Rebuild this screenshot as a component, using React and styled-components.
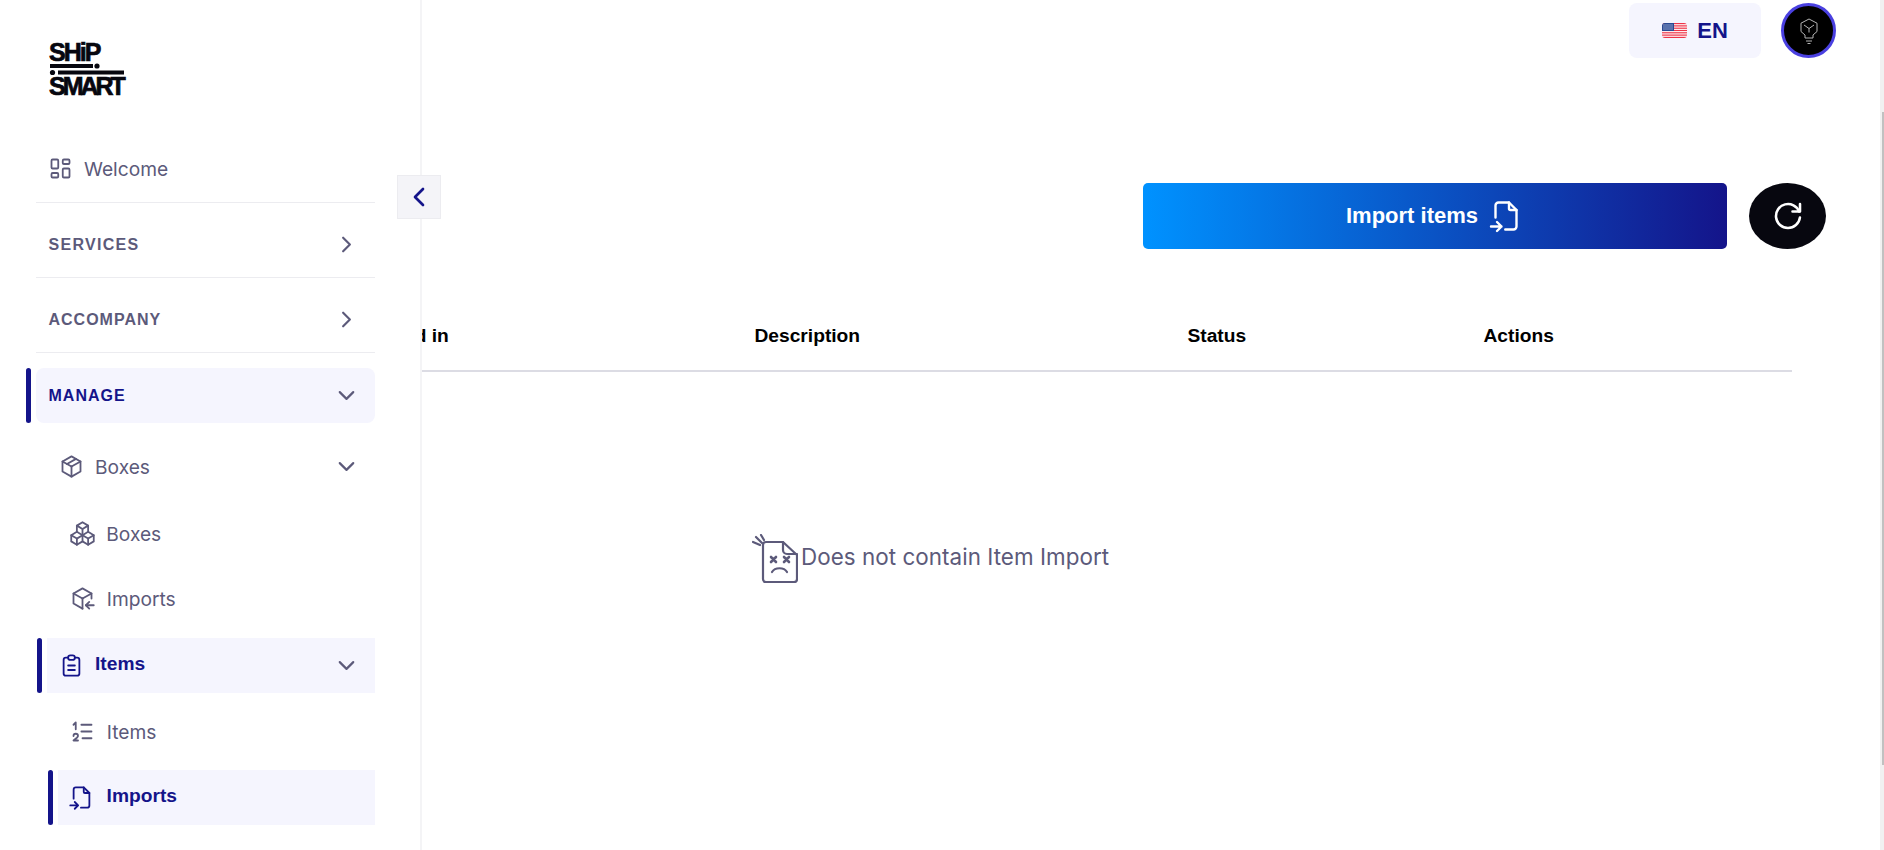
import React from 'react';
import styled, { createGlobalStyle } from 'styled-components';
import {
  TbLayoutDashboard,
  TbChevronRight,
  TbChevronDown,
  TbChevronLeft,
  TbPackage,
  TbPackages,
  TbPackageImport,
  TbClipboardText,
  TbListNumbers,
  TbFileImport,
  TbReload,
} from 'react-icons/tb';

const NAVY = '#14148a';
const MUTED = '#5c5a7a';
const TINT = '#f5f5fe';

const GlobalStyle = createGlobalStyle`
  html, body {
    margin: 0;
    height: 100%;
    overflow: hidden;
    background: #fff;
  }
  #root {
    height: 100%;
  }
  * {
    box-sizing: border-box;
  }
`;

const Page = styled.div`
  display: flex;
  height: 850px;
  width: 1884px;
  overflow: hidden;
  font-family: Inter, "Liberation Sans", sans-serif;
`;

const Sidebar = styled.aside`
  position: relative;
  z-index: 2;
  flex: 0 0 422px;
  background: #fff;
  border-right: 2px solid #f4f4f6;
  padding: 43px 45px 0 0;
`;

const Logo = styled.div`
  width: 78px;
  height: 54px;
  margin: 0 0 38px 49px;
  display: flex;
  flex-direction: column;
  color: #07070f;
  font-family: "Liberation Sans", sans-serif;
  font-weight: 700;
`;

const LogoWord = styled.span`
  display: block;
  height: 18px;
  font-size: 25px;
  line-height: 18px;
  letter-spacing: ${p => p.$spacing}px;
  white-space: nowrap;
  -webkit-text-stroke: 0.7px #07070f;
`;

const LogoBars = styled.svg`
  display: block;
  flex: none;
  width: 76px;
  height: 16px;
`;

const Row = styled.div`
  position: relative;
  display: flex;
  align-items: center;
  height: ${p => p.$h || 55}px;
  margin-left: ${p => p.$left}px;
  padding-left: ${p => p.$pad}px;
  padding-right: 15px;
  padding-top: ${p => p.$top || 0}px;
  color: ${p => (p.$active ? NAVY : MUTED)};
  background: ${p => (p.$active ? TINT : 'transparent')};
  border-radius: ${p => p.$radius || 0}px;
  border-bottom: ${p => (p.$line ? '1px solid #ececf0' : 'none')};
  margin-bottom: ${p => p.$gap || 0}px;
`;

const Marker = styled.span`
  position: absolute;
  left: -10px;
  top: 0;
  bottom: 0;
  width: 5px;
  border-radius: 3px;
  background: ${NAVY};
`;

const RowIcon = styled.span`
  display: flex;
  flex: none;
  font-size: 27px;
  margin-right: ${p => p.$gap || 10.5}px;
  color: ${p => (p.$active ? NAVY : MUTED)};
  svg {
    stroke-width: 1.6;
  }
`;

const Label = styled.span`
  flex: 1;
  font-family: ${p => (p.$active ? '"Liberation Sans", sans-serif' : 'inherit')};
  font-size: 19.2px;
  font-weight: ${p => (p.$active ? 700 : 400)};
  padding-bottom: ${p => (p.$active ? 3 : 0)}px;
`;

const Heading = styled.span`
  flex: 1;
  font-family: "Liberation Sans", sans-serif;
  font-size: 16px;
  font-weight: 700;
  letter-spacing: ${p => p.$spacing || 1}px;
`;

const Caret = styled.span`
  display: flex;
  flex: none;
  font-size: 27px;
  color: ${MUTED};
  svg {
    stroke-width: 1.9;
  }
`;

const Collapse = styled.button`
  position: absolute;
  top: 175px;
  right: -21px;
  width: 44px;
  height: 44px;
  padding: 0;
  display: flex;
  align-items: center;
  justify-content: center;
  background: #f4f4f8;
  border: 1px solid #ececf0;
  color: ${NAVY};
  font-size: 32px;
`;

const Main = styled.main`
  flex: 1;
  min-width: 0;
  display: flex;
  flex-direction: column;
`;

const TopBar = styled.div`
  flex: none;
  height: 183px;
  padding: 3px 44px 0 0;
  display: flex;
  justify-content: flex-end;
  gap: 20px;
`;

const LangButton = styled.button`
  width: 132px;
  height: 55px;
  border: 0;
  border-radius: 8px;
  background: ${TINT};
  display: flex;
  align-items: center;
  justify-content: center;
  gap: 10px;
  color: ${NAVY};
  font-family: "Liberation Sans", sans-serif;
  font-size: 22px;
  font-weight: 700;
`;

const Avatar = styled.div`
  width: 55px;
  height: 55px;
  border-radius: 50%;
  background: #000;
  border: 3px solid #4a40e0;
  display: flex;
  align-items: center;
  justify-content: center;
`;

const Actions = styled.div`
  display: flex;
  justify-content: flex-end;
  gap: 22px;
  padding-right: 54px;
`;

const ImportButton = styled.button`
  width: 584px;
  height: 66px;
  border: 0;
  border-radius: 5px;
  background: linear-gradient(90deg, #0092ff 0%, #14148a 100%);
  color: #fff;
  display: flex;
  align-items: center;
  justify-content: center;
  gap: 10px;
  font-family: "Liberation Sans", sans-serif;
  font-size: 22px;
  font-weight: 700;
  svg {
    font-size: 36px;
    stroke-width: 1.6;
  }
`;

const RefreshButton = styled.button`
  width: 77px;
  height: 66px;
  border: 0;
  padding: 0;
  border-radius: 50%;
  background: #07070f;
  color: #fff;
  display: flex;
  align-items: center;
  justify-content: center;
  font-size: 36px;
  svg {
    stroke-width: 1.7;
  }
`;

const Table = styled.div`
  margin: 37px 88px 0 -67px;
`;

const HeaderRow = styled.div`
  display: grid;
  grid-template-columns: 399.5px 433px 296px 1fr;
  height: 86px;
  padding-top: 16px;
  align-items: center;
  border-bottom: 2px solid #dcdce4;
  color: #000;
  font-family: "Liberation Sans", sans-serif;
  font-size: 19.2px;
  font-weight: 700;
`;

const Empty = styled.div`
  display: flex;
  align-items: center;
  gap: 3px;
  margin: 162px 0 0 397px;
  color: ${MUTED};
  font-size: 22.4px;
  letter-spacing: 0.05px;
`;

const EmptyText = styled.span`
  padding-bottom: 5px;
`;

const ScrollTrack = styled.div`
  flex: 0 0 4px;
  background: #f1f1f1;
  padding: 112px 0 0 2px;
`;

const ScrollThumb = styled.div`
  height: 653px;
  background: #c1c1c1;
`;

const Flag = () => (
  <svg width="25" height="15" viewBox="0 0 25 15">
    <defs>
      <clipPath id="flag-clip">
        <rect width="25" height="15" rx="3" />
      </clipPath>
    </defs>
    <g clipPath="url(#flag-clip)">
      <rect width="25" height="15" fill="#fff" />
      {[0, 2.3, 4.6, 6.9, 9.2, 11.5, 13.8].map(y => (
        <rect key={y} y={y} width="25" height="1.2" fill="#ee3348" />
      ))}
      <rect width="12" height="8" fill="#2a4a92" />
      <rect x="1" y="1" width="10" height="6" fill="#7f93c2" opacity="0.55" />
    </g>
  </svg>
);

const Bulb = () => (
  <svg width="20" height="28" viewBox="0 0 20 28" fill="none" stroke="#b5b5b5" strokeWidth="1">
    <path d="M10 2l8 4.2v8.3l-4 3.500v3H6v-3l-4-3.500v-8.300z" />
    <path d="M5 8l5 3.500 5-3.500M10 11.500v4M7 24h6M8.500 26.500h3" />
  </svg>
);

const DeadFile = () => (
  <svg width="46" height="50" viewBox="0 0 46 50" fill="none" stroke={MUTED} strokeWidth="2.2" strokeLinecap="round" strokeLinejoin="round">
    <path d="M11 11a3 3 0 0 1 3-3h17l14 13v24a3 3 0 0 1-3 3H14a3 3 0 0 1-3-3z" />
    <path d="M31 8v8a4 4 0 0 0 4 4h10" />
    <path d="M1 8l7 3M4 3l6 6M9 1l3 5" />
    <path d="M19 23l5 5M24 23l-5 5M32 23l5 5M37 23l-5 5" strokeWidth="2.6" />
    <path d="M20 38c3-5 12-5 15 0" />
  </svg>
);

const App = () => (
  <Page>
    <GlobalStyle />
    <Sidebar>
      <Logo>
        <LogoWord $spacing={-2}>SHiP</LogoWord>
        <LogoBars viewBox="0 0 76 16">
          <rect x="1" y="3" width="43" height="4" fill="#07070f" />
          <circle cx="48" cy="5" r="2.6" fill="#07070f" />
          <circle cx="3.500" cy="11.500" r="2.6" fill="#07070f" />
          <rect x="9" y="9.500" width="66" height="4" fill="#07070f" />
        </LogoBars>
        <LogoWord $spacing={-3}>SMART</LogoWord>
      </Logo>

      <Row $left={36} $pad={10.5} $h={68} $line>
        <RowIcon><TbLayoutDashboard /></RowIcon>
        <Label>Welcome</Label>
      </Row>
      <Row $left={36} $pad={12.5} $h={75} $top={9} $line>
        <Heading $spacing={1.3}>SERVICES</Heading>
        <Caret><TbChevronRight /></Caret>
      </Row>
      <Row $left={36} $pad={12.5} $h={75} $top={9} $line $gap={15}>
        <Heading>ACCOMPANY</Heading>
        <Caret><TbChevronRight /></Caret>
      </Row>
      <Row $left={36} $pad={12.5} $active $radius={8} $gap={16}>
        <Marker />
        <Heading>MANAGE</Heading>
        <Caret><TbChevronDown /></Caret>
      </Row>
      <Row $left={36} $pad={21.5} $gap={12}>
        <RowIcon><TbPackage /></RowIcon>
        <Label>Boxes</Label>
        <Caret><TbChevronDown /></Caret>
      </Row>
      <Row $left={36} $pad={32.75} $gap={10}>
        <RowIcon $gap={10.5}><TbPackages /></RowIcon>
        <Label>Boxes</Label>
      </Row>
      <Row $left={36} $pad={32.75} $gap={12}>
        <RowIcon $gap={11}><TbPackageImport /></RowIcon>
        <Label>Imports</Label>
      </Row>
      <Row $left={47} $pad={10.5} $active $gap={11}>
        <Marker />
        <RowIcon $active><TbClipboardText /></RowIcon>
        <Label $active>Items</Label>
        <Caret><TbChevronDown /></Caret>
      </Row>
      <Row $left={47} $pad={21.75} $gap={11}>
        <RowIcon $gap={11}><TbListNumbers /></RowIcon>
        <Label>Items</Label>
      </Row>
      <Row $left={58} $pad={9.6} $active>
        <Marker />
        <RowIcon $active $gap={12}><TbFileImport /></RowIcon>
        <Label $active>Imports</Label>
      </Row>

      <Collapse><TbChevronLeft /></Collapse>
    </Sidebar>

    <Main>
      <TopBar>
        <LangButton><Flag />EN</LangButton>
        <Avatar><Bulb /></Avatar>
      </TopBar>
      <Actions>
        <ImportButton>Import items <TbFileImport /></ImportButton>
        <RefreshButton><TbReload /></RefreshButton>
      </Actions>
      <Table>
        <HeaderRow>
          <span>Created in</span>
          <span>Description</span>
          <span>Status</span>
          <span>Actions</span>
        </HeaderRow>
        <Empty>
          <DeadFile />
          <EmptyText>Does not contain Item Import</EmptyText>
        </Empty>
      </Table>
    </Main>
    <ScrollTrack><ScrollThumb /></ScrollTrack>
  </Page>
);

export default App;
